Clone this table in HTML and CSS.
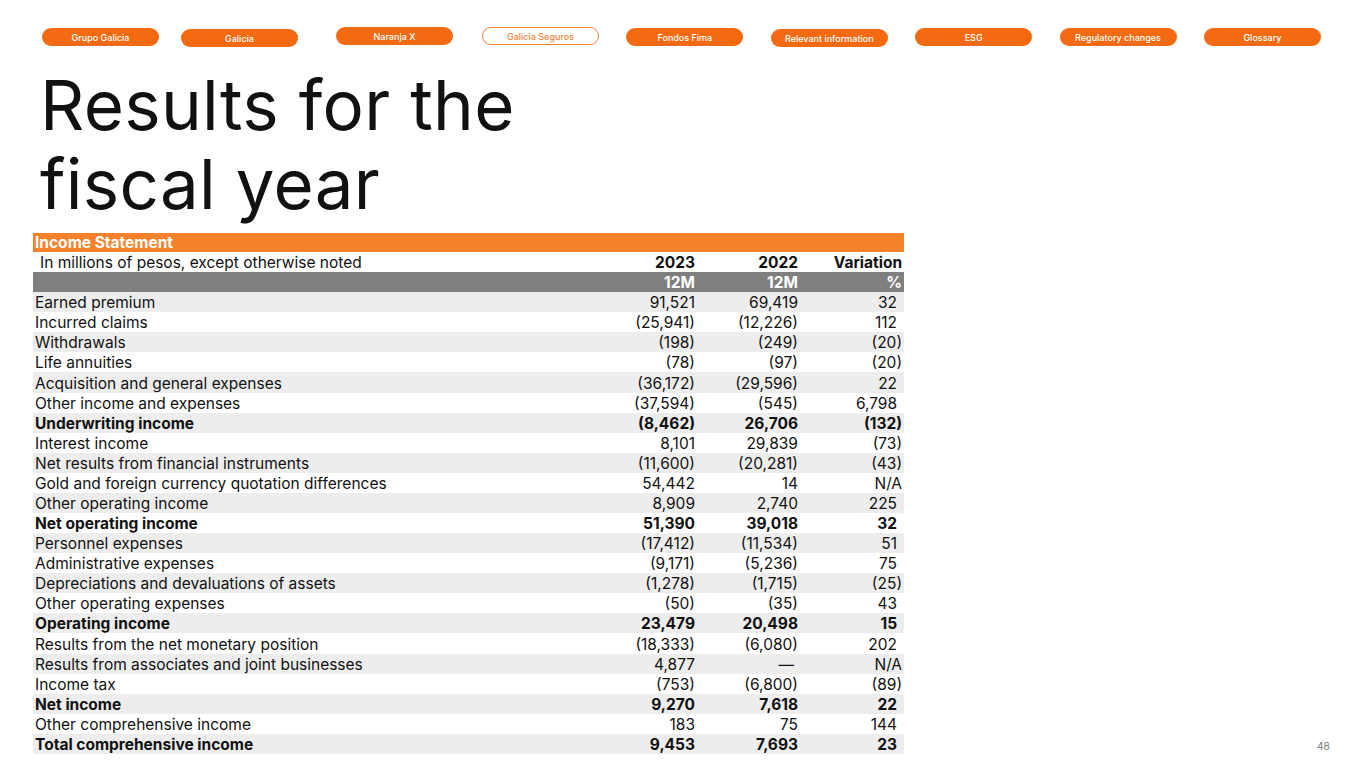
FILE: index.html
```html
<!DOCTYPE html>
<html lang="en">
<head>
<meta charset="utf-8">
<title>Results for the fiscal year</title>
<link rel="stylesheet" href="styles.css">
</head>
<body>
<div class="slide">
  <nav class="tabs">
    <a class="tab t1">Grupo Galicia</a>
    <a class="tab t2">Galicia</a>
    <a class="tab t3">Naranja X</a>
    <a class="tab t4 active">Galicia Seguros</a>
    <a class="tab t5">Fondos Fima</a>
    <a class="tab t6">Relevant information</a>
    <a class="tab t7">ESG</a>
    <a class="tab t8">Regulatory changes</a>
    <a class="tab t9">Glossary</a>
  </nav>
  <h1 class="title">Results for the<br>fiscal year</h1>
  <table class="fin">
    <colgroup>
      <col class="c-label"><col class="c-num"><col class="c-num2"><col class="c-var">
    </colgroup>
    <tr class="head-orange"><th colspan="4">Income Statement</th></tr>
    <tr class="head-years"><td class="indent">In millions of pesos, except otherwise noted</td><td>2023</td><td>2022</td><td>Variation</td></tr>
    <tr class="head-gray"><td></td><td>12M</td><td>12M</td><td>%</td></tr>
    <tr class="s"><td>Earned premium</td><td>91,521</td><td>69,419</td><td class="p">32</td></tr>
    <tr><td>Incurred claims</td><td>(25,941)</td><td>(12,226)</td><td class="p">112</td></tr>
    <tr class="s"><td>Withdrawals</td><td>(198)</td><td>(249)</td><td>(20)</td></tr>
    <tr><td>Life annuities</td><td>(78)</td><td>(97)</td><td>(20)</td></tr>
    <tr class="s"><td>Acquisition and general expenses</td><td>(36,172)</td><td>(29,596)</td><td class="p">22</td></tr>
    <tr><td>Other income and expenses</td><td>(37,594)</td><td>(545)</td><td class="p">6,798</td></tr>
    <tr class="s b"><td>Underwriting income</td><td>(8,462)</td><td>26,706</td><td>(132)</td></tr>
    <tr><td>Interest income</td><td>8,101</td><td>29,839</td><td>(73)</td></tr>
    <tr class="s"><td>Net results from financial instruments</td><td>(11,600)</td><td>(20,281)</td><td>(43)</td></tr>
    <tr><td>Gold and foreign currency quotation differences</td><td>54,442</td><td>14</td><td>N/A</td></tr>
    <tr class="s"><td>Other operating income</td><td>8,909</td><td>2,740</td><td class="p">225</td></tr>
    <tr class="b"><td>Net operating income</td><td>51,390</td><td>39,018</td><td class="p">32</td></tr>
    <tr class="s"><td>Personnel expenses</td><td>(17,412)</td><td>(11,534)</td><td class="p">51</td></tr>
    <tr><td>Administrative expenses</td><td>(9,171)</td><td>(5,236)</td><td class="p">75</td></tr>
    <tr class="s"><td>Depreciations and devaluations of assets</td><td>(1,278)</td><td>(1,715)</td><td>(25)</td></tr>
    <tr><td>Other operating expenses</td><td>(50)</td><td>(35)</td><td class="p">43</td></tr>
    <tr class="s b"><td>Operating income</td><td>23,479</td><td>20,498</td><td class="p">15</td></tr>
    <tr><td>Results from the net monetary position</td><td>(18,333)</td><td>(6,080)</td><td class="p">202</td></tr>
    <tr class="s"><td>Results from associates and joint businesses</td><td>4,877</td><td class="dash">—</td><td>N/A</td></tr>
    <tr><td>Income tax</td><td>(753)</td><td>(6,800)</td><td>(89)</td></tr>
    <tr class="s b"><td>Net income</td><td>9,270</td><td>7,618</td><td class="p">22</td></tr>
    <tr><td>Other comprehensive income</td><td>183</td><td>75</td><td class="p">144</td></tr>
    <tr class="s b"><td>Total comprehensive income</td><td>9,453</td><td>7,693</td><td class="p">23</td></tr>
  </table>
  <div class="page-num">48</div>
</div>
</body>
</html>
```

FILE: styles.css
```css
* { box-sizing: border-box; }
html, body {
  margin: 0;
  padding: 0;
  background: #ffffff;
}
body {
  font-family: Inter, "Noto Sans", "Liberation Sans", sans-serif;
  color: #111111;
}
.slide {
  position: relative;
  width: 1365px;
  height: 768px;
  overflow: hidden;
}
.tabs {
  display: flex;
  align-items: flex-start;
  padding: 28px 0 0 42px;
  gap: 27.4px;
  height: 46px;
}
.tab {
  display: flex;
  align-items: center;
  justify-content: center;
  flex: 0 0 117px;
  height: 18px;
  border-radius: 9px;
  background: #f36a10;
  color: #ffffff;
  font-size: 9px;
  font-weight: 500;
  text-decoration: none;
}
.tab.t2 { margin-left: -5.4px; margin-top: 1px; }
.tab.t3 { margin-left: 10.6px; margin-top: -1px; }
.tab.t4 { margin-left: 1.6px; margin-top: -1px; }
.tab.t6 { margin-top: 1px; }
.tab.active {
  background: #ffffff;
  border: 1.5px solid #f0843e;
  color: #f0843e;
}
.title {
  margin: 20px 0 0 40px;
  font-size: 69px;
  font-weight: 400;
  line-height: 79px;
  letter-spacing: 0.3px;
  color: #111111;
  height: 167px;
}
.fin {
  margin-left: 33px;
  border-collapse: collapse;
  width: 871px;
  table-layout: fixed;
  font-size: 15.5px;
}
.c-label { width: 565px; }
.c-num { width: 99px; }
.c-num2 { width: 103px; }
.c-var { width: 104px; }
.fin td, .fin th {
  height: 20.08px;
  padding: 1px 2px 0;
  line-height: 19px;
  white-space: nowrap;
  text-align: right;
  font-weight: 400;
}
.fin td:first-child, .fin th { text-align: left; }
.fin .head-orange th {
  background: #f5822a;
  color: #ffffff;
  font-weight: 700;
  height: 19px;
  padding-top: 0;
  line-height: 19px;
}
.fin .head-years td { font-weight: 700; }
.fin .head-years td.indent { font-weight: 400; padding-left: 7px; }
.fin .head-gray td {
  background: #7f7f7f;
  color: #ffffff;
  font-weight: 700;
}
.fin tr.s td { background: #ededed; }
.fin tr.b td { font-weight: 700; }
.fin td.p { padding-right: 7px; }
.fin td.dash { padding-right: 6px; }
.page-num {
  position: absolute;
  left: 1317px;
  top: 740px;
  font-size: 10px;
  color: #777777;
}
```
